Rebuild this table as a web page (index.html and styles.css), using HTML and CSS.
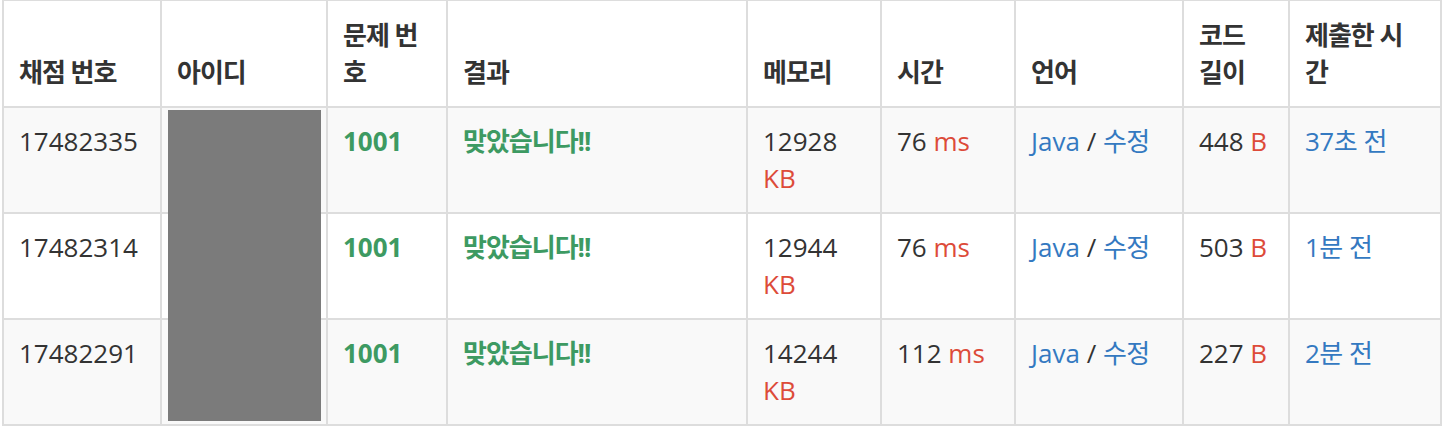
FILE: index.html
```html
<!DOCTYPE html>
<html lang="ko">
<head>
<meta charset="utf-8">
<title>채점 현황</title>
<link rel="stylesheet" href="styles.css">
</head>
<body>
<div class="wrap">
  <table class="status">
    <colgroup>
      <col class="c1"><col class="c2"><col class="c3"><col class="c4"><col class="c5"><col class="c6"><col class="c7"><col class="c8"><col class="c9">
    </colgroup>
    <thead>
      <tr>
        <th>채점 번호</th>
        <th>아이디</th>
        <th>문제 번호</th>
        <th>결과</th>
        <th>메모리</th>
        <th>시간</th>
        <th>언어</th>
        <th>코드 길이</th>
        <th>제출한 시간</th>
      </tr>
    </thead>
    <tbody>
      <tr class="odd">
        <td>17482335</td>
        <td></td>
        <td><a class="prob">1001</a></td>
        <td><span class="ac">맞았습니다!!</span></td>
        <td>12928 <span class="unit">KB</span></td>
        <td>76 <span class="unit">ms</span></td>
        <td><a class="link">Java</a> / <a class="link ko">수정</a></td>
        <td>448 <span class="unit">B</span></td>
        <td><a class="link ko">37초 전</a></td>
      </tr>
      <tr>
        <td>17482314</td>
        <td></td>
        <td><a class="prob">1001</a></td>
        <td><span class="ac">맞았습니다!!</span></td>
        <td>12944 <span class="unit">KB</span></td>
        <td>76 <span class="unit">ms</span></td>
        <td><a class="link">Java</a> / <a class="link ko">수정</a></td>
        <td>503 <span class="unit">B</span></td>
        <td><a class="link ko">1분 전</a></td>
      </tr>
      <tr class="odd">
        <td>17482291</td>
        <td></td>
        <td><a class="prob">1001</a></td>
        <td><span class="ac">맞았습니다!!</span></td>
        <td>14244 <span class="unit">KB</span></td>
        <td>112 <span class="unit">ms</span></td>
        <td><a class="link">Java</a> / <a class="link ko">수정</a></td>
        <td>227 <span class="unit">B</span></td>
        <td><a class="link ko">2분 전</a></td>
      </tr>
    </tbody>
  </table>
  <div class="redact"></div>
</div>
</body>
</html>
```

FILE: styles.css
```css
html, body {
  margin: 0;
  padding: 0;
  background: #fff;
}
body {
  font-family: "Open Sans", "Noto Sans CJK KR", sans-serif;
  font-size: 26px;
  line-height: 37px;
  color: #333;
}
.wrap {
  position: relative;
  padding-left: 2px;
  margin-top: -1px;
}
.status {
  border-collapse: separate;
  border-spacing: 0;
  table-layout: fixed;
  width: 1440px;
  border-left: 2px solid #ddd;
  border-top: 2px solid #ddd;
}
.c1 { width: 158px; }
.c2 { width: 166px; }
.c3 { width: 120px; }
.c4 { width: 300px; }
.c5 { width: 134px; }
.c6 { width: 134px; }
.c7 { width: 168px; }
.c8 { width: 106px; }
.c9 { width: 152px; }
.status th,
.status td {
  padding: 15px;
  border-right: 2px solid #ddd;
  border-bottom: 2px solid #ddd;
  text-align: left;
}
.status th {
  height: 75px;
  vertical-align: bottom;
  font-weight: 700;
  letter-spacing: -1px;
}
.status td {
  height: 74px;
  vertical-align: top;
}
.status tbody tr.odd td {
  background: #f9f9f9;
}
.prob {
  color: #3d9a62;
  font-weight: 700;
}
.ac {
  color: #3d9a62;
  font-weight: 700;
  letter-spacing: -1px;
}
.ko {
  letter-spacing: -0.5px;
}
.unit {
  color: #dd4b39;
}
.link {
  color: #3479c1;
}
.redact {
  position: absolute;
  left: 168px;
  top: 111px;
  width: 153px;
  height: 311px;
  background: #7b7b7b;
}
```
